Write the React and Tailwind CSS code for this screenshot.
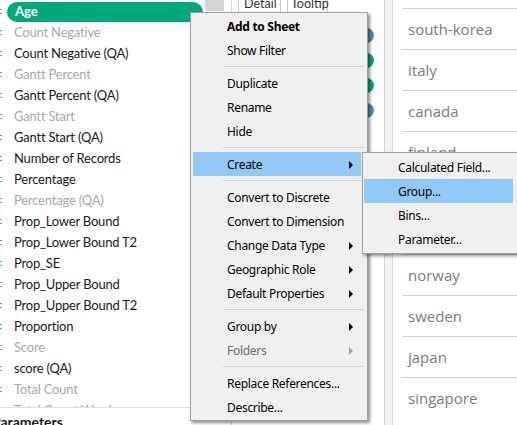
import React from "react";

const fields = [
  { t: "Age", pill: true },
  { t: "Count Negative", g: true },
  { t: "Count Negative (QA)" },
  { t: "Gantt Percent", g: true },
  { t: "Gantt Percent (QA)" },
  { t: "Gantt Start", g: true },
  { t: "Gantt Start (QA)" },
  { t: "Number of Records" },
  { t: "Percentage" },
  { t: "Percentage (QA)", g: true },
  { t: "Prop_Lower Bound" },
  { t: "Prop_Lower Bound T2" },
  { t: "Prop_SE" },
  { t: "Prop_Upper Bound" },
  { t: "Prop_Upper Bound T2" },
  { t: "Proportion" },
  { t: "Score", g: true },
  { t: "score (QA)" },
  { t: "Total Count", g: true },
  { t: "Total Count Words", g: true },
];

const countries = [
  "south-korea",
  "italy",
  "canada",
  "finland",
  "france",
  "germany",
  "norway",
  "sweden",
  "japan",
  "singapore",
];

const menu = [
  { t: "Add to Sheet", b: true },
  { t: "Show Filter" },
  { sep: true },
  { t: "Duplicate" },
  { t: "Rename" },
  { t: "Hide" },
  { sep: true },
  { t: "Create", sub: true, hi: true },
  { sep: true },
  { t: "Convert to Discrete" },
  { t: "Convert to Dimension" },
  { t: "Change Data Type", sub: true },
  { t: "Geographic Role", sub: true },
  { t: "Default Properties", sub: true },
  { sep: true },
  { t: "Group by", sub: true },
  { t: "Folders", sub: true, dis: true },
  { sep: true },
  { t: "Replace References..." },
  { t: "Describe..." },
];

const submenu = [
  { t: "Calculated Field..." },
  { t: "Group...", hi: true },
  { t: "Bins..." },
  { t: "Parameter..." },
];

function Marker() {
  return (
    <div className="absolute left-0 top-0 h-full w-[2px] flex flex-col justify-center gap-[3px]">
      <div className="h-[1px] w-[2px] bg-[#4fb3a0]" />
      <div className="h-[1px] w-[2px] bg-[#4fb3a0]" />
    </div>
  );
}

function Arrow({ dis }) {
  return (
    <div
      className={
        "w-0 h-0 border-l-[4px] border-y-[4px] border-y-transparent " +
        (dis ? "border-l-[#a0a0a0]" : "border-l-black")
      }
    />
  );
}

export default function App() {
  return (
    <div className="relative w-[517px] h-[425px] overflow-hidden bg-white flex font-['Lato',sans-serif]">
      {/* Left data pane */}
      <div className="w-[205px] shrink-0 flex flex-col">
        <div className="h-[407px] overflow-hidden pt-[1px]">
          {fields.map((f, i) => (
            <div key={i} className="relative h-[21px] flex items-center">
              <Marker />
              {f.pill ? (
                <div className="ml-[7px] w-[196px] h-[20px] rounded-full bg-[#02a87a] flex items-center pl-[8px] text-[13px] text-white font-bold">
                  Age
                </div>
              ) : (
                <span
                  className={
                    "pl-[14px] text-[13px] tracking-[-0.2px] " +
                    (f.g ? "text-[#a9a9a9]" : "text-[#1a1a1a]")
                  }
                >
                  {f.t}
                </span>
              )}
            </div>
          ))}
        </div>
        <div className="border-t border-[#dedede] h-[18px] flex items-end overflow-hidden">
          <span className="ml-[-8px] text-[14px] font-bold text-[#1a1a1a] leading-[16px] translate-y-[5px]">
            Parameters
          </span>
        </div>
      </div>

      {/* scrollbar gutter */}
      <div className="w-[19px] shrink-0 bg-white">
        <div className="h-[11px] bg-[#d4d4d4]" />
      </div>

      {/* Middle marks area */}
      <div className="w-[168px] shrink-0 flex bg-white">
        <div className="w-[8px] border-r border-[#d6d6d6]" />
        <div className="w-[152px] flex flex-col pl-[6px] bg-white">
          <div className="flex h-[12px] overflow-hidden">
            <div className="w-[43px] h-[17px] -mt-[4px] border border-[#c8c8c8] bg-white flex items-center pl-[5px] text-[12.5px] text-[#333]">
              Detail
            </div>
            <div className="ml-[6px] w-[41px] h-[17px] -mt-[4px] border border-[#c8c8c8] bg-white flex items-center pl-[3px] text-[12.5px] text-[#333]">
              Tooltip
            </div>
          </div>
          <div className="flex flex-col gap-[10px] mt-[16px] pl-[1px]">
            <div className="w-[135px] h-[15px] rounded-full bg-[#4a8fab]" />
            <div className="w-[135px] h-[15px] rounded-full bg-[#02a87a]" />
            <div className="w-[135px] h-[15px] rounded-full bg-[#02a87a]" />
            <div className="w-[135px] h-[15px] rounded-full bg-[#4a8fab]" />
          </div>
        </div>
        <div className="w-[8px] border-l border-[#d6d6d6] bg-[#f3f3f3]" />
      </div>

      {/* Right list */}
      <div className="flex-1 border-l border-[#d6d6d6] pl-[9px] pt-[8px]">
        {countries.map((c) => (
          <div
            key={c}
            className="h-[41px] border-t border-[#d2d2d2] flex items-center pl-[6px] text-[15px] text-[#7c7c7c] font-['Open_Sans',sans-serif]"
          >
            {c}
          </div>
        ))}
      </div>

      {/* Context menu */}
      <div className="absolute left-[190px] top-[12px] w-[178px] bg-[#f0f0f0] border border-[#a0a0a0] py-[1px] shadow-[2px_2px_3px_rgba(0,0,0,0.45)] font-['Noto_Sans',sans-serif] text-[12px] tracking-[-0.3px] text-black">
        {menu.map((m, i) =>
          m.sep ? (
            <div key={i} className="h-[9px] flex items-center pl-[32px] pr-[3px]">
              <div className="h-[1px] w-full bg-[#d2d2d2]" />
            </div>
          ) : (
            <div
              key={i}
              className={
                "h-[24px] ml-[2px] mr-[6px] flex items-center pl-[34px] pr-[8px] pt-[1px] " +
                (m.hi ? "bg-[#91c9f7]" : "")
              }
            >
              <span
                className={
                  "flex-1 " +
                  (m.b ? "font-bold " : "") +
                  (m.dis ? "text-[#6d6d6d]" : "")
                }
              >
                {m.t}
              </span>
              {m.sub && <Arrow dis={m.dis} />}
            </div>
          )
        )}
      </div>

      {/* Submenu */}
      <div className="absolute left-[362px] top-[152px] w-[156px] bg-[#f0f0f0] border border-[#a0a0a0] py-[2px] shadow-[2px_2px_3px_rgba(0,0,0,0.45)] font-['Noto_Sans',sans-serif] text-[12px] tracking-[-0.3px] text-black">
        {submenu.map((m, i) => (
          <div
            key={i}
            className={
              "h-[24px] ml-[1px] mr-[4px] flex items-center pl-[34px] pt-[1px] " +
              (m.hi ? "bg-[#91c9f7]" : "")
            }
          >
            {m.t}
          </div>
        ))}
      </div>
    </div>
  );
}
